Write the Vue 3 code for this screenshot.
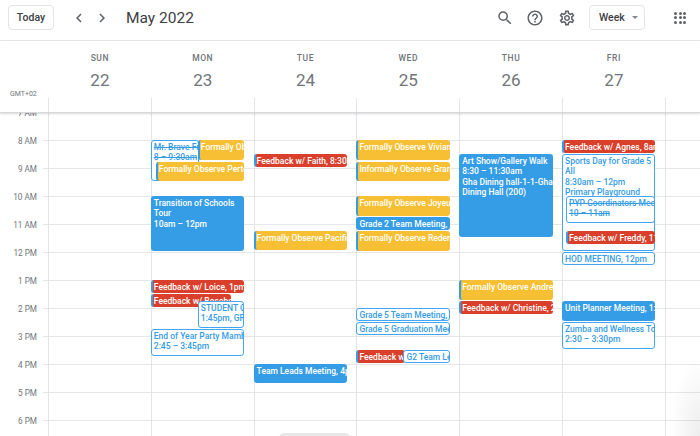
<script setup>
const days = [
  { name: 'SUN', num: 22 },
  { name: 'MON', num: 23 },
  { name: 'TUE', num: 24 },
  { name: 'WED', num: 25 },
  { name: 'THU', num: 26 },
  { name: 'FRI', num: 27 },
]

const hours = ['7 AM', '8 AM', '9 AM', '10 AM', '11 AM', '12 PM', '1 PM', '2 PM', '3 PM', '4 PM', '5 PM', '6 PM']

// y is the top on screen, body starts at 112
const events = [
  { day: 1, y: 140, h: 41, x: 0, w: 48, kind: 'outline strike', lines: ['Mr. Brave Francis', '8 – 9:30am'] },
  { day: 1, y: 140, h: 20, x: 47, w: 46, kind: 'yellow bar', lines: ['Formally Observe'] },
  { day: 1, y: 162, h: 19, x: 5, w: 88, kind: 'yellow bar', lines: ['Formally Observe Pertence'] },
  { day: 1, y: 196, h: 55, x: 0, w: 93, kind: 'blue', lines: ['Transition of Schools', 'Tour', '10am – 12pm'] },
  { day: 1, y: 280, h: 13, x: 0, w: 93, kind: 'red bar', lines: ['Feedback w/ Loice, 1pm'] },
  { day: 1, y: 294, h: 13, x: 0, w: 80, kind: 'red bar', lines: ['Feedback w/ Rosebella'] },
  { day: 1, y: 301, h: 27, x: 47, w: 46, kind: 'outline', lines: ['STUDENT COUNCIL', '1:45pm, GRADE'] },
  { day: 1, y: 329, h: 27, x: 0, w: 93, kind: 'outline', lines: ['End of Year Party Mamba', '2:45 – 3:45pm'] },

  { day: 2, y: 154, h: 13, x: 0, w: 93, kind: 'red bar', lines: ['Feedback w/ Faith, 8:30am'] },
  { day: 2, y: 231, h: 19, x: 0, w: 93, kind: 'yellow bar', lines: ['Formally Observe Pacifique'] },
  { day: 2, y: 364, h: 19, x: 0, w: 93, kind: 'blue', lines: ['Team Leads Meeting, 4pm'] },

  { day: 3, y: 140, h: 20, x: 0, w: 93, kind: 'yellow bar', lines: ['Formally Observe Vivian'] },
  { day: 3, y: 162, h: 19, x: 0, w: 93, kind: 'yellow bar', lines: ['Informally Observe Grant'] },
  { day: 3, y: 196, h: 20, x: 0, w: 93, kind: 'yellow bar', lines: ['Formally Observe Joyeuse'] },
  { day: 3, y: 217, h: 13, x: 0, w: 93, kind: 'blue', lines: ['Grade 2 Team Meeting, 11am'] },
  { day: 3, y: 231, h: 20, x: 0, w: 93, kind: 'yellow bar', lines: ['Formally Observe Redempta'] },
  { day: 3, y: 308, h: 13, x: 0, w: 93, kind: 'outline', lines: ['Grade 5 Team Meeting, 2pm'] },
  { day: 3, y: 322, h: 13, x: 0, w: 93, kind: 'outline', lines: ['Grade 5 Graduation Meeting'] },
  { day: 3, y: 350, h: 13, x: 0, w: 48, kind: 'red bar', lines: ['Feedback w/ Ann'] },
  { day: 3, y: 350, h: 13, x: 47, w: 46, kind: 'outline', lines: ['G2 Team Leads'] },

  { day: 4, y: 154, h: 83, x: 0, w: 93, kind: 'blue', lines: ['Art Show/Gallery Walk', '8:30 – 11:30am', 'Gha Dining hall-1-1-Gha', 'Dining Hall (200)'] },
  { day: 4, y: 280, h: 20, x: 0, w: 93, kind: 'yellow bar', lines: ['Formally Observe Andrew'] },
  { day: 4, y: 301, h: 13, x: 0, w: 93, kind: 'red bar', lines: ['Feedback w/ Christine, 2pm'] },

  { day: 5, y: 140, h: 13, x: 0, w: 93, kind: 'red bar', lines: ['Feedback w/ Agnes, 8am'] },
  { day: 5, y: 154, h: 97, x: 0, w: 93, kind: 'outline', lines: ['Sports Day for Grade 5', 'All', '8:30am – 12pm', 'Primary Playground'] },
  { day: 5, y: 196, h: 27, x: 4, w: 89, kind: 'outline strike', lines: ['PYP Coordinators Meeting', '10 – 11am'] },
  { day: 5, y: 231, h: 13, x: 4, w: 89, kind: 'red bar', lines: ['Feedback w/ Freddy, 11:30am'] },
  { day: 5, y: 252, h: 13, x: 0, w: 93, kind: 'outline', lines: ['HOD MEETING, 12pm'] },
  { day: 5, y: 301, h: 20, x: 0, w: 93, kind: 'blue', lines: ['Unit Planner Meeting, 1:45pm'] },
  { day: 5, y: 322, h: 27, x: 0, w: 93, kind: 'outline', lines: ['Zumba and Wellness Today', '2:30 – 3:30pm'] },
]

const dayEvents = (i) => events.filter((e) => e.day === i)

const eventStyle = (e) => ({
  top: `${e.y - 112}px`,
  height: `${e.h}px`,
  left: `${e.x - 1}px`,
  width: `${e.w + 0.5}px`,
})
</script>

<template>
  <div class="page">
    <header class="topbar">
      <button class="btn today">Today</button>
      <div class="arrows">
        <svg viewBox="0 0 24 24" width="18" height="18"><path d="M15.41 7.41 14 6l-6 6 6 6 1.41-1.41L10.83 12z" /></svg>
        <svg viewBox="0 0 24 24" width="18" height="18"><path d="M8.59 16.59 10 18l6-6-6-6-1.41 1.41L13.17 12z" /></svg>
      </div>
      <h1 class="title">May 2022</h1>
      <div class="tools">
        <svg viewBox="0 0 24 24" width="18" height="18"><path d="M15.5 14h-.79l-.28-.27A6.47 6.47 0 0 0 16 9.5 6.5 6.5 0 1 0 9.5 16c1.61 0 3.09-.59 4.23-1.57l.27.28v.79l5 4.99L20.49 19l-4.99-5zm-6 0C7.01 14 5 11.99 5 9.5S7.01 5 9.5 5 14 7.01 14 9.5 11.99 14 9.5 14z" /></svg>
        <svg class="help" viewBox="0 0 24 24" width="18" height="18"><path d="M11 18h2v-2h-2v2zm1-16C6.48 2 2 6.48 2 12s4.48 10 10 10 10-4.48 10-10S17.52 2 12 2zm0 18c-4.41 0-8-3.59-8-8s3.59-8 8-8 8 3.59 8 8-3.59 8-8 8zm0-14c-2.21 0-4 1.79-4 4h2c0-1.1.9-2 2-2s2 .9 2 2c0 2-3 1.75-3 5h2c0-2.25 3-2.5 3-5 0-2.21-1.79-4-4-4z" /></svg>
        <svg viewBox="0 0 24 24" width="18" height="18"><path d="M19.43 12.98c.04-.32.07-.64.07-.98s-.03-.66-.07-.98l2.11-1.65c.19-.15.24-.42.12-.64l-2-3.46c-.12-.22-.39-.3-.61-.22l-2.49 1c-.52-.4-1.08-.73-1.69-.98l-.38-2.65A.49.49 0 0 0 14 2h-4c-.25 0-.46.18-.49.42l-.38 2.65c-.61.25-1.17.59-1.69.98l-2.49-1c-.23-.09-.49 0-.61.22l-2 3.46c-.13.22-.07.49.12.64l2.11 1.65c-.04.32-.07.65-.07.98s.03.66.07.98l-2.11 1.65c-.19.15-.24.42-.12.64l2 3.46c.12.22.39.3.61.22l2.49-1c.52.4 1.08.73 1.69.98l.38 2.65c.03.24.24.42.49.42h4c.25 0 .46-.18.49-.42l.38-2.65c.61-.25 1.17-.59 1.69-.98l2.49 1c.23.09.49 0 .61-.22l2-3.46c.12-.22.07-.49-.12-.64l-2.11-1.65zM17.45 11.27c.04.31.05.52.05.73s-.02.43-.05.73l-.14 1.13.89.7 1.08.84-.7 1.21-1.27-.51-1.04-.42-.9.68c-.43.32-.84.56-1.25.73l-1.06.43-.16 1.13-.2 1.35h-1.4l-.19-1.35-.16-1.13-1.06-.43c-.43-.18-.83-.41-1.23-.71l-.91-.7-1.06.43-1.27.51-.7-1.21 1.08-.84.89-.7-.14-1.13c-.03-.31-.05-.54-.05-.74s.02-.43.05-.73l.14-1.13-.89-.7-1.08-.84.7-1.21 1.27.51 1.04.42.9-.68c.43-.32.84-.56 1.25-.73l1.06-.43.16-1.13.2-1.35h1.39l.19 1.35.16 1.13 1.06.43c.43.18.83.41 1.23.71l.91.7 1.06-.43 1.27-.51.7 1.21-1.07.85-.89.7.14 1.13zM12 8c-2.21 0-4 1.79-4 4s1.79 4 4 4 4-1.79 4-4-1.79-4-4-4zm0 6c-1.1 0-2-.9-2-2s.9-2 2-2 2 .9 2 2-.9 2-2 2z" /></svg>
      </div>
      <button class="btn week">Week<span class="caret"></span></button>
      <div class="apps">
        <i v-for="n in 9" :key="n"></i>
      </div>
    </header>

    <div class="dayhead">
      <div class="zone">GMT+02</div>
      <div v-for="d in days" :key="d.name" class="dayhead-col">
        <div class="dayname">{{ d.name }}</div>
        <div class="daynum">{{ d.num }}</div>
        <div class="tick"></div>
      </div>
      <div class="dayhead-end"><div class="tick"></div></div>
    </div>

    <div class="body">
      <div class="gutter">
        <div v-for="h in hours" :key="h" class="hour"><span>{{ h }}</span></div>
      </div>
      <div v-for="(d, i) in days" :key="d.name" class="col">
        <div
          v-for="e in dayEvents(i)"
          :key="e.lines[0]"
          class="event"
          :class="e.kind"
          :style="eventStyle(e)"
        >
          <div v-for="l in e.lines" :key="l" class="line">{{ l }}</div>
        </div>
      </div>
      <div class="col end"></div>
    </div>

    <div class="pill"></div>
    <div class="corner"></div>
  </div>
</template>

<style>
html, body {
  margin: 0;
  background: #fff;
}
</style>

<style scoped>
.page {
  position: relative;
  width: 700px;
  height: 436px;
  overflow: hidden;
  background: #fff;
  font-family: Roboto, "Liberation Sans", sans-serif;
  color: #3c4043;
}

.topbar {
  display: flex;
  align-items: center;
  height: 41px;
  box-sizing: border-box;
  padding: 0 14px 5px 8px;
  border-bottom: 1px solid #e6e7e9;
}

.btn {
  display: flex;
  align-items: center;
  height: 25px;
  box-sizing: border-box;
  border: 1px solid #e3e4e7;
  border-radius: 4px;
  background: #fff;
  font-family: inherit;
  font-size: 10.5px;
  font-weight: 500;
  color: #3c4043;
  padding: 0;
}

.today {
  width: 46px;
  justify-content: center;
}

.arrows {
  display: flex;
  gap: 5px;
  margin-left: 16px;
}

.arrows svg {
  fill: #5f6368;
}

.title {
  margin: 0 0 0 15px;
  font-size: 15.5px;
  font-weight: 400;
  color: #3c4043;
  flex: 1;
}

.tools {
  display: flex;
  gap: 12px;
}

.tools svg {
  fill: #5f6368;
}

.tools .help {
  margin-right: 2px;
}

.week {
  width: 56px;
  margin-left: 13px;
  padding-left: 9px;
}

.caret {
  margin-left: 7px;
  border-left: 3px solid transparent;
  border-right: 3px solid transparent;
  border-top: 3px solid #80868b;
}

.apps {
  display: grid;
  grid-template-columns: repeat(3, 3px);
  gap: 1.5px;
  margin-left: 29px;
}

.apps i {
  width: 3px;
  height: 3px;
  border-radius: 50%;
  background: #5f6368;
}

.dayhead {
  display: grid;
  grid-template-columns: 48px repeat(6, 102.8px) 1fr;
  height: 72px;
  box-sizing: border-box;
  border-bottom: 1px solid #d6d8db;
  box-shadow: 0 1px 2px rgba(60, 64, 67, 0.2);
  position: relative;
  z-index: 2;
  background: #fff;
}

.zone {
  align-self: end;
  padding: 0 0 14px 10px;
  font-size: 7px;
  color: #70757a;
}

.dayhead-col {
  display: flex;
  flex-direction: column;
  align-items: center;
  position: relative;
  padding-left: 1px;
}

.dayname {
  margin-top: 12px;
  font-size: 8.5px;
  line-height: 11px;
  font-weight: 500;
  letter-spacing: 0.6px;
  color: #70757a;
}

.daynum {
  margin-top: 3px;
  font-size: 17px;
  line-height: 26px;
  color: #70757a;
}

.tick {
  position: absolute;
  left: 0;
  bottom: 0;
  height: 14px;
  border-left: 1px solid #e3e4e7;
}

.dayhead-end {
  position: relative;
}

.body {
  display: grid;
  grid-template-columns: 48px repeat(6, 102.8px) 1fr;
  height: 324px;
  margin-top: -1px;
  overflow: hidden;
}

.gutter {
  display: flex;
  flex-direction: column;
}

.hour {
  flex: none;
  height: 28px;
  position: relative;
  box-sizing: border-box;
}

.hour span {
  position: absolute;
  right: 11px;
  top: 1px;
  transform: translateY(-50%);
  font-size: 8.2px;
  color: #70757a;
}

.hour::after {
  content: "";
  position: absolute;
  right: 0;
  top: 0;
  width: 5px;
  border-top: 1px solid #e3e4e7;
}

.col {
  position: relative;
  border-left: 1px solid #e3e4e7;
  background: repeating-linear-gradient(to bottom, #e6e7e9 0, #e6e7e9 1px, transparent 1px, transparent 28px);
}

.event {
  position: absolute;
  box-sizing: border-box;
  overflow: hidden;
  border-radius: 3px;
  padding: 1.5px 0 0 3px;
  font-size: 8.5px;
  line-height: 10.5px;
  font-weight: 500;
  color: #fff;
}

.line {
  white-space: nowrap;
}

.blue {
  background: #359ce6;
}

.yellow {
  background: #f7bf33;
}

.red {
  background: #d93f2b;
}

.bar {
  border-left: 2px solid #359ce6;
  padding-left: 1px;
}

.outline {
  background: #fff;
  border: 1px solid #42a5f5;
  color: #359ce6;
  padding: 0.5px 0 0 2px;
}

.strike .line {
  text-decoration: line-through;
}

.pill {
  position: absolute;
  left: 279px;
  top: 433px;
  width: 71px;
  height: 10px;
  border-radius: 5px;
  background: #e8e8e8;
}

.corner {
  position: absolute;
  right: 0;
  bottom: 0;
  width: 30px;
  height: 80px;
  background: radial-gradient(ellipse at 100% 100%, rgba(0, 0, 0, 0.07), transparent 70%);
}
</style>
